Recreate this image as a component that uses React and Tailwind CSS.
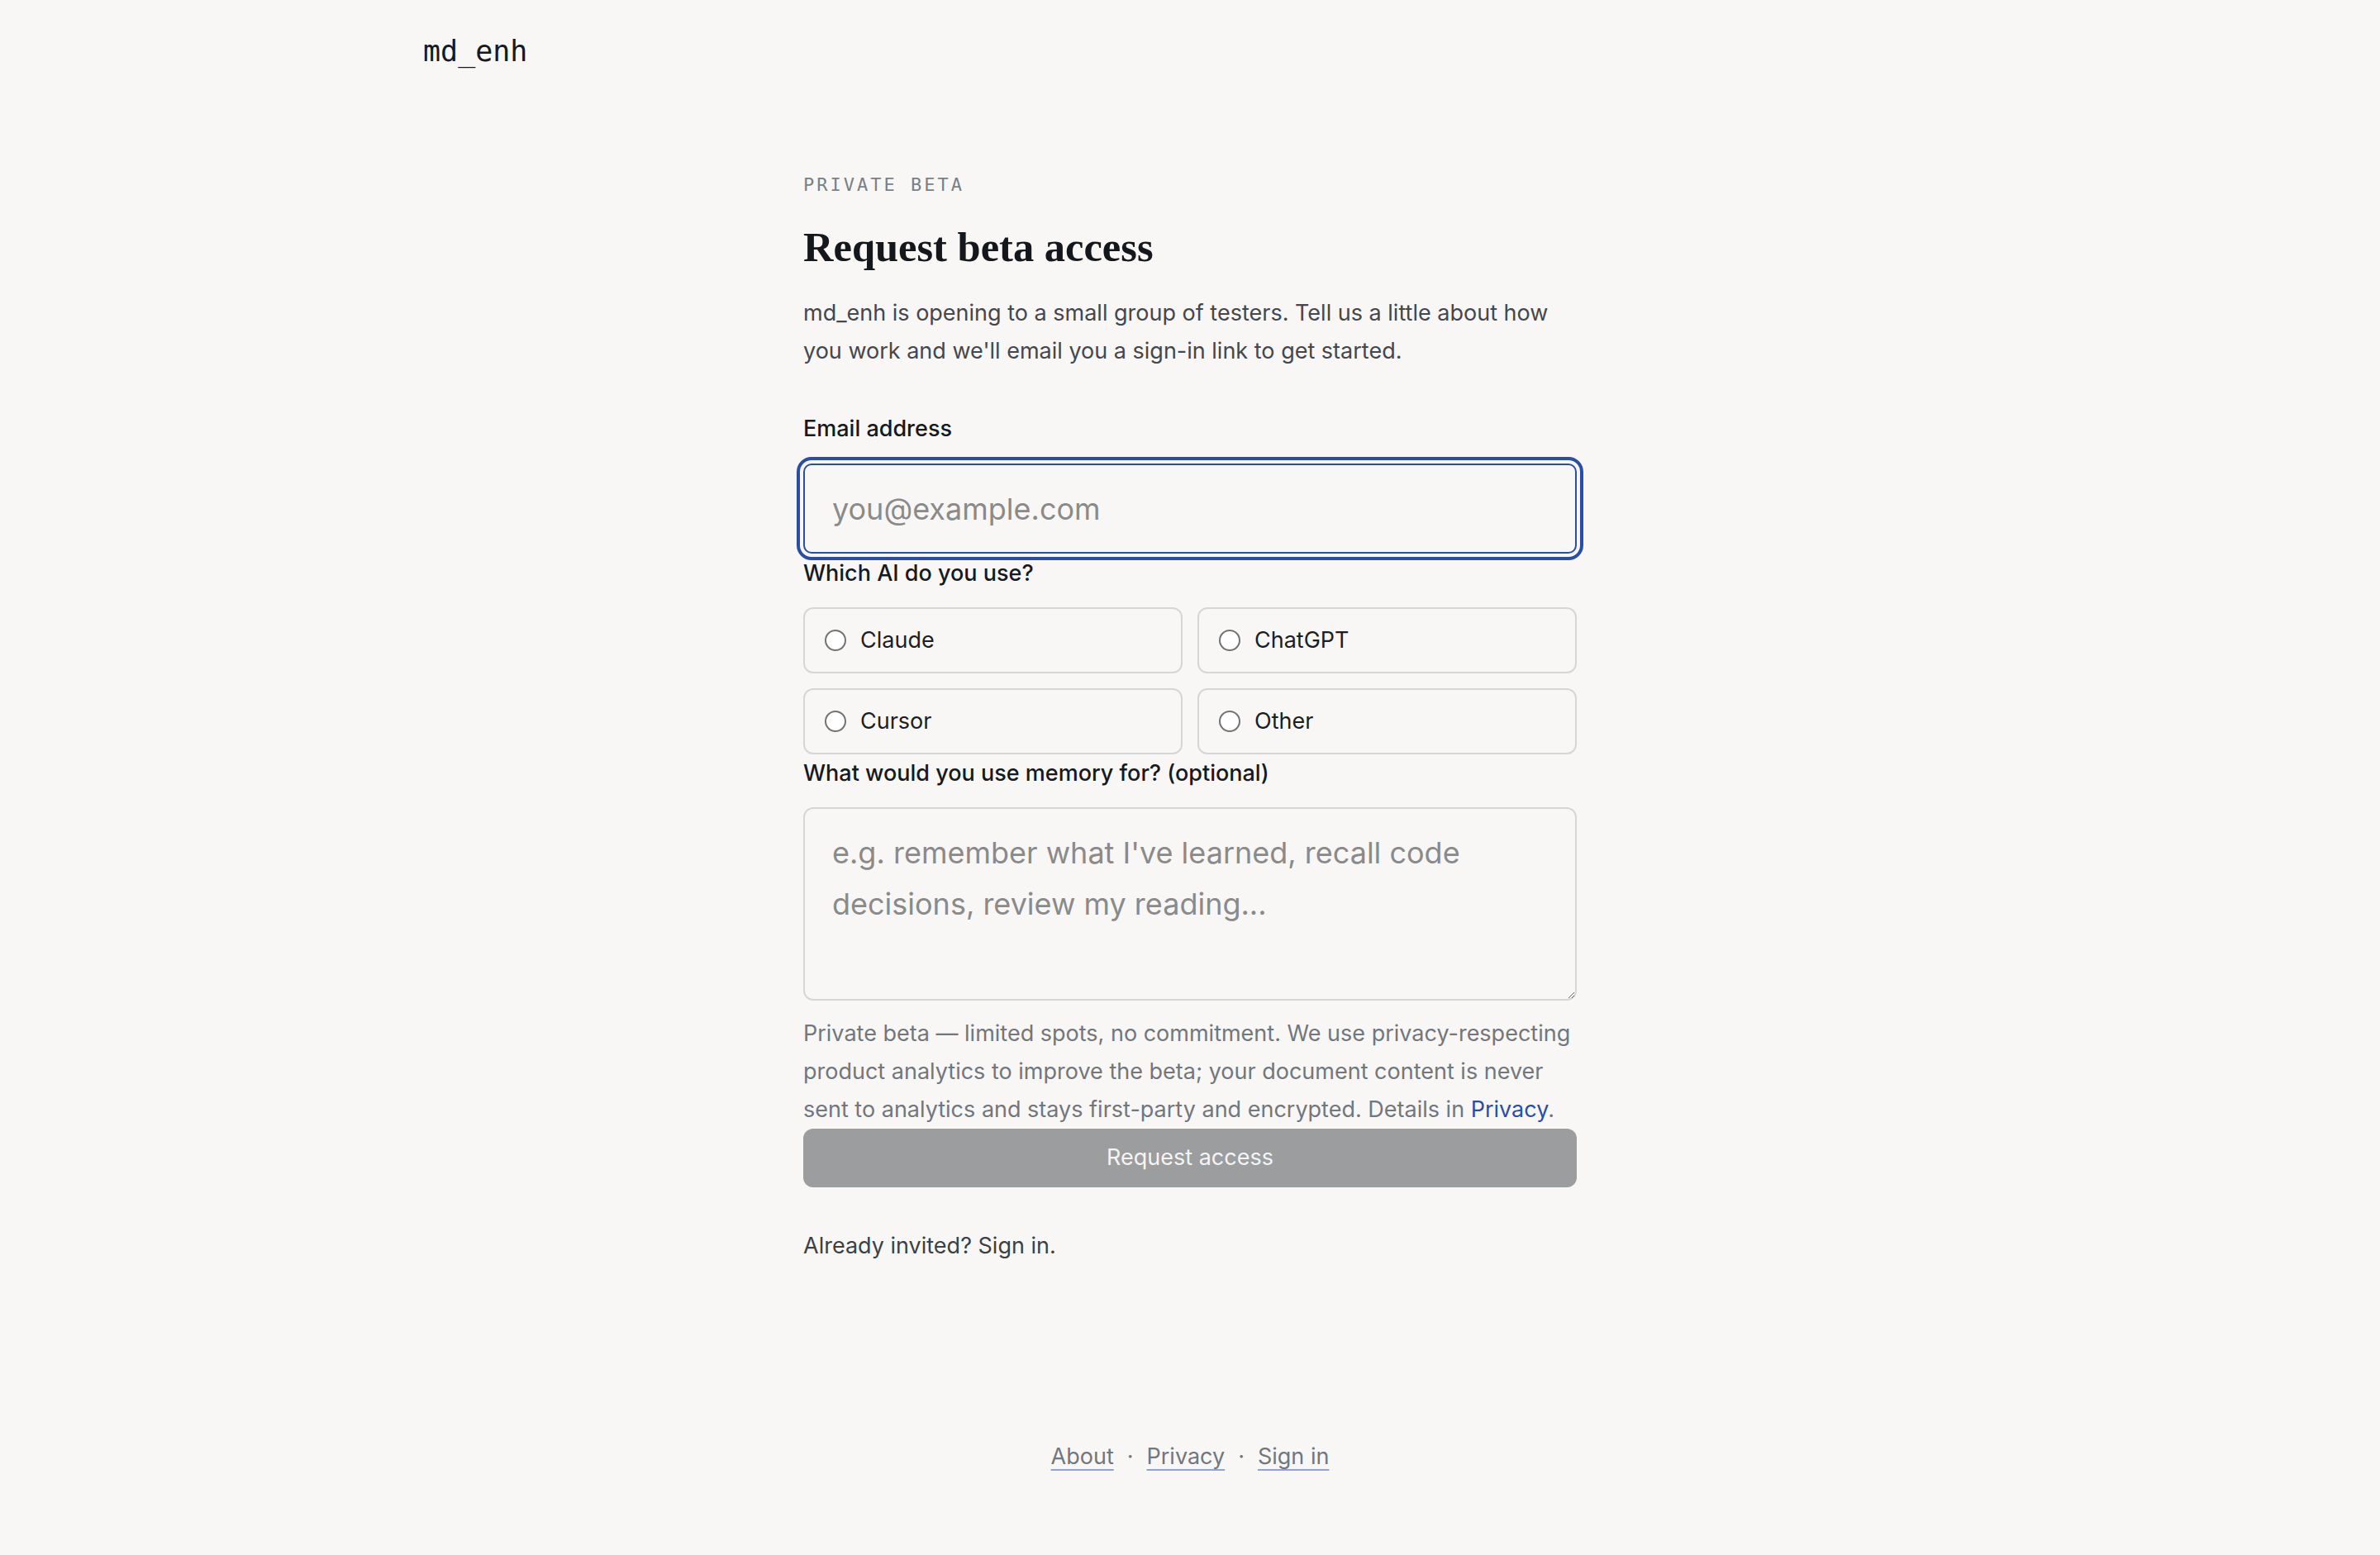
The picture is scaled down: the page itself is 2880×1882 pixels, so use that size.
import React from "react";

export default function App() {
  return (
    <div className="min-h-screen flex flex-col bg-[#f8f7f5] text-[#1b1e23] font-['Inter',_'Noto_Sans',_sans-serif]">
      <header className="w-[1856px] mx-auto pt-[42px]">
        <div className="font-['DejaVu_Sans_Mono',_monospace] text-[35px] leading-[40px] text-[#16191e]">
          md_enh
        </div>
      </header>

      <main className="flex-1">
        <div className="w-[936px] mx-auto pt-[128px]">
          <p className="font-['DejaVu_Sans_Mono',_monospace] text-[22px] leading-[28px] tracking-[3px] text-[#7b7f86]">
            PRIVATE BETA
          </p>
          <h1 className="mt-[33px] font-['Liberation_Serif',_serif] font-bold text-[50.5px] leading-[56px] text-[#14171c]">
            Request beta access
          </h1>
          <p className="mt-[29px] text-[27px] leading-[46px] text-[#44474d]">
            md_enh is opening to a small group of testers. Tell us a little about how
            you work and we'll email you a sign-in link to get started.
          </p>

          <form className="flex flex-col" onSubmit={(e) => e.preventDefault()}>
            <label
              htmlFor="email"
              className="mt-[53px] text-[27px] leading-[36px] font-medium text-[#16191e]"
            >
              Email address
            </label>
            <input
              id="email"
              type="email"
              placeholder="you@example.com"
              className="mt-[24px] h-[109px] w-full rounded-[10px] border-2 border-[#2a4ea6] bg-transparent px-[33px] text-[36px] text-[#1b1e23] placeholder:text-[#8a8a8a] outline-solid outline-4 outline-offset-4 outline-[#2a4ea6]"
            />

            <span className="mt-[6px] text-[27px] leading-[36px] font-medium text-[#16191e]">
              Which AI do you use?
            </span>
            <div className="mt-[23px] grid grid-cols-2 gap-[18px]">
              {["Claude", "ChatGPT", "Cursor", "Other"].map((name) => (
                <label
                  key={name}
                  className="flex items-center h-[80px] rounded-[12px] border-2 border-[#d5d6d8] pl-[24px] gap-[17px] text-[27px] text-[#1b1e23]"
                >
                  <input
                    type="radio"
                    name="ai"
                    className="appearance-none m-0 w-[26px] h-[26px] shrink-0 rounded-full border-2 border-[#737373] bg-white"
                  />
                  <span>{name}</span>
                </label>
              ))}
            </div>

            <label
              htmlFor="memory"
              className="mt-[5px] text-[27px] leading-[36px] font-medium text-[#16191e]"
            >
              What would you use memory for? (optional)
            </label>
            <textarea
              id="memory"
              placeholder="e.g. remember what I've learned, recall code decisions, review my reading..."
              className="mt-[23px] h-[234px] w-full rounded-[12px] border-2 border-[#d5d6d8] bg-transparent px-[33px] pt-[22px] text-[36px] leading-[62px] placeholder:text-[#8a8a8a] outline-none"
            />

            <p className="mt-[17px] text-[27px] leading-[46px] text-[#72767d]">
              Private beta — limited spots, no commitment. We use privacy-respecting
              product analytics to improve the beta; your document content is never
              sent to analytics and stays first-party and encrypted. Details in{" "}
              <a href="#" className="text-[#2a4ea6]">Privacy</a>.
            </p>

            <button
              type="submit"
              className="mt-0 h-[71px] w-full rounded-[12px] bg-[#9c9d9f] text-[27px] text-[#f4f4f4]"
            >
              Request access
            </button>
          </form>

          <p className="mt-[48px] text-[27px] leading-[46px] text-[#3c3f44]">
            Already invited? <a href="#">Sign in</a>.
          </p>
        </div>
      </main>

      <footer className="pb-[96px] flex justify-center items-center gap-[16px] text-[27px] leading-[46px] text-[#72767d]">
        <a href="#" className="underline decoration-2 decoration-[#8ea2d4] underline-offset-[6px]">About</a>
        <span>·</span>
        <a href="#" className="underline decoration-2 decoration-[#8ea2d4] underline-offset-[6px]">Privacy</a>
        <span>·</span>
        <a href="#" className="underline decoration-2 decoration-[#8ea2d4] underline-offset-[6px]">Sign in</a>
      </footer>
    </div>
  );
}
